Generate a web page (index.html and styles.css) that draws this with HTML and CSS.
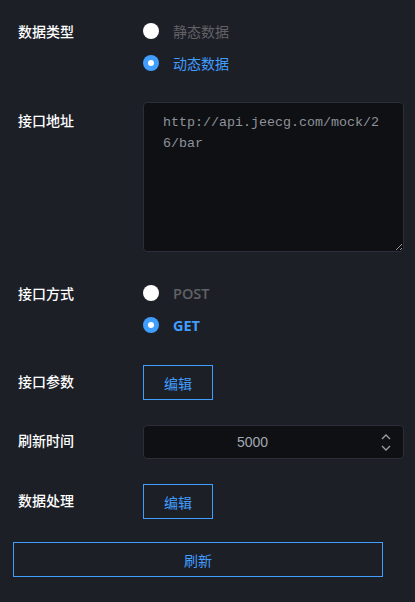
FILE: index.html
```html
<!DOCTYPE html>
<html lang="zh">
<head>
<meta charset="utf-8">
<link rel="stylesheet" href="styles.css">
</head>
<body>
<div class="form">
  <div class="row row-radio">
    <div class="label">数据类型</div>
    <div class="control">
      <div class="radios">
        <label class="radio"><span class="dot"></span><span class="rtext">静态数据</span></label>
        <label class="radio checked"><span class="dot"></span><span class="rtext">动态数据</span></label>
      </div>
    </div>
  </div>
  <div class="row row-area">
    <div class="label label-area">接口地址</div>
    <div class="control">
      <textarea class="area">http://api.jeecg.com/mock/26/bar</textarea>
    </div>
  </div>
  <div class="row row-radio row-method">
    <div class="label">接口方式</div>
    <div class="control">
      <div class="radios">
        <label class="radio"><span class="dot"></span><span class="rtext latin">POST</span></label>
        <label class="radio checked"><span class="dot"></span><span class="rtext latin">GET</span></label>
      </div>
    </div>
  </div>
  <div class="row row-btn">
    <div class="label">接口参数</div>
    <div class="control"><button class="btn">编辑</button></div>
  </div>
  <div class="row row-num">
    <div class="label label-num">刷新时间</div>
    <div class="control">
      <div class="num">
        <span class="num-val">5000</span>
        <span class="arrows">
          <svg width="12" height="9" viewBox="0 0 12 9"><path d="M2 7 L6 3 L10 7" fill="none" stroke="#9aa0a8" stroke-width="1.3"/></svg>
          <svg width="12" height="9" viewBox="0 0 12 9"><path d="M2 2 L6 6 L10 2" fill="none" stroke="#9aa0a8" stroke-width="1.3"/></svg>
        </span>
      </div>
    </div>
  </div>
  <div class="row row-btn row-last">
    <div class="label">数据处理</div>
    <div class="control"><button class="btn">编辑</button></div>
  </div>
  <button class="btn btn-wide">刷新</button>
</div>
</body>
</html>
```
FILE: styles.css
```css
html, body {
  margin: 0;
  padding: 0;
  background: #1d1f27;
  height: 100%;
}
body {
  font-family: "Noto Sans CJK SC", "Noto Sans", sans-serif;
  font-size: 14px;
  color: #fff;
}
.form {
  padding: 15px 11px 0 13px;
  display: flex;
  flex-direction: column;
}
.row {
  display: flex;
  align-items: flex-start;
  margin-bottom: 24px;
}
.row-radio { margin-bottom: 23px; }
.row-area { margin-bottom: 25px; }
.row-method { margin-bottom: 24px; }
.row-btn { margin-bottom: 25px; }
.row-num { margin-bottom: 25px; }
.row-last { margin-bottom: 23px; }
.label {
  width: 130px;
  padding-left: 5px;
  box-sizing: border-box;
  line-height: 32px;
  font-weight: 500;
  color: #fff;
  flex-shrink: 0;
}
.label-area { padding-top: 2px; }
.label-num { line-height: 30px; }
.control {
  width: 261px;
}
.radios {
  display: flex;
  flex-direction: column;
}
.radio {
  height: 32px;
  display: flex;
  align-items: center;
  color: #606266;
  font-weight: 400;
}
.latin {
  font-family: "Open Sans", "Liberation Sans", sans-serif;
  font-weight: 600;
  font-size: 14.5px;
}
.dot {
  width: 16px;
  height: 16px;
  border-radius: 50%;
  background: #fff;
  box-sizing: border-box;
  margin-right: 14px;
  position: relative;
}
.checked { color: #409eff; }
.checked .latin { font-weight: 700; }
.checked .dot { background: #409eff; }
.checked .dot::after {
  content: "";
  position: absolute;
  left: 5px;
  top: 5px;
  width: 6px;
  height: 6px;
  border-radius: 50%;
  background: #fff;
}
.area {
  display: block;
  width: 261px;
  height: 150px;
  box-sizing: border-box;
  background: #0e1014;
  border: 1px solid #2b2e38;
  border-radius: 4px;
  padding: 9px 20px 5px 19px;
  font-family: "Liberation Mono", monospace;
  font-size: 13.33px;
  line-height: 21px;
  color: #8e939b;
  resize: vertical;
  outline: none;
  margin: 0;
}
.btn {
  height: 35px;
  width: 70px;
  background: transparent;
  border: 1px solid #409eff;
  color: #409eff;
  font-family: "Noto Sans CJK SC", sans-serif;
  font-size: 14px;
  padding: 0;
  margin: 0;
  cursor: pointer;
}
.btn-wide {
  width: 370px;
  height: 35px;
}
.num {
  height: 34px;
  box-sizing: border-box;
  background: #0e1014;
  border: 1px solid #2b2e38;
  border-radius: 4px;
  display: flex;
  align-items: center;
  padding: 0 11px 0 15px;
}
.num-val {
  flex: 1;
  text-align: center;
  padding-right: 34px;
  font-family: "Liberation Sans", sans-serif;
  font-size: 14px;
  color: #a3a8b0;
}
.arrows {
  display: flex;
  flex-direction: column;
  gap: 3px;
}
.arrows svg { display: block; }
```
